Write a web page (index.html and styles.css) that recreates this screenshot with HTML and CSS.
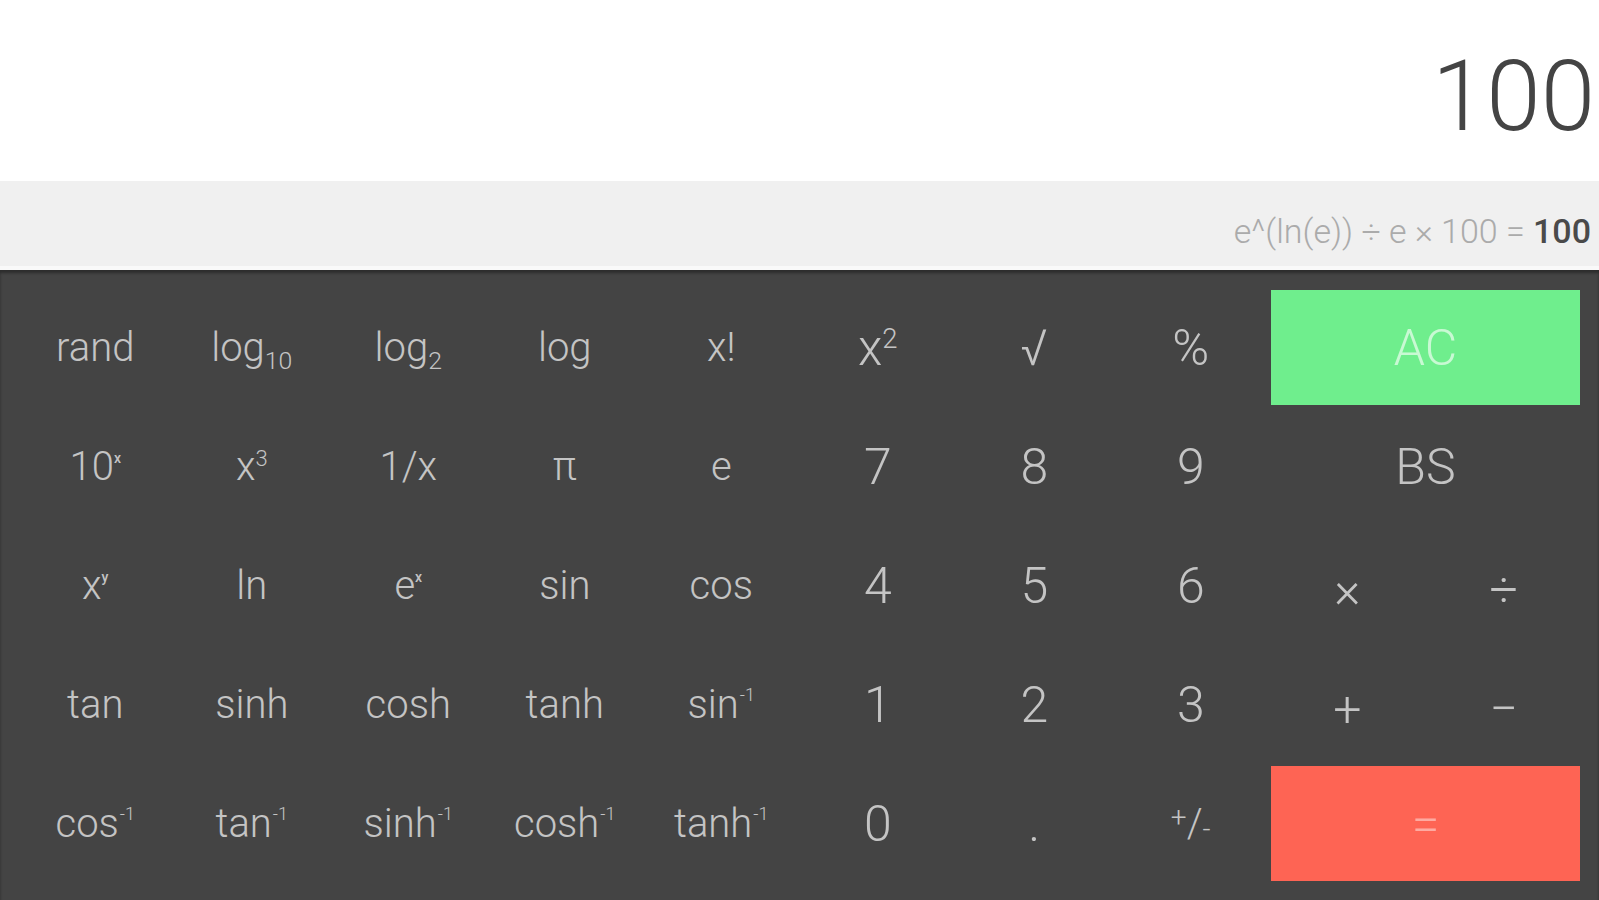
FILE: index.html
```html
<!DOCTYPE html>
<html lang="en">
<head>
<meta charset="utf-8">
<title>Calculator</title>
<link rel="stylesheet" href="styles.css">
</head>
<body>
<div class="calc">
  <div class="display"><span class="result">100</span></div>
  <div class="history"><span class="expr">e^(ln(e)) ÷ e × 100 = </span><b class="answer">100</b></div>
  <div class="keypad">
    <div class="key"><span>rand</span></div>
    <div class="key"><span>log<sub>10</sub></span></div>
    <div class="key"><span>log<sub>2</sub></span></div>
    <div class="key"><span>log</span></div>
    <div class="key"><span>x!</span></div>
    <div class="key big"><span>x<sup class="pow">2</sup></span></div>
    <div class="key big"><span>√</span></div>
    <div class="key big"><span>%</span></div>
    <div class="key big wide ac"><span>AC</span></div>

    <div class="key"><span>10<sup class="tiny">x</sup></span></div>
    <div class="key"><span>x<sup class="pow">3</sup></span></div>
    <div class="key"><span>1/x</span></div>
    <div class="key"><span>π</span></div>
    <div class="key"><span>e</span></div>
    <div class="key big"><span>7</span></div>
    <div class="key big"><span>8</span></div>
    <div class="key big"><span>9</span></div>
    <div class="key big wide"><span>BS</span></div>

    <div class="key"><span>x<sup class="tiny">y</sup></span></div>
    <div class="key"><span>ln</span></div>
    <div class="key"><span>e<sup class="tiny">x</sup></span></div>
    <div class="key"><span>sin</span></div>
    <div class="key"><span>cos</span></div>
    <div class="key big"><span>4</span></div>
    <div class="key big"><span>5</span></div>
    <div class="key big"><span>6</span></div>
    <div class="key big op"><span>×</span></div>
    <div class="key big op"><span>÷</span></div>

    <div class="key"><span>tan</span></div>
    <div class="key"><span>sinh</span></div>
    <div class="key"><span>cosh</span></div>
    <div class="key"><span>tanh</span></div>
    <div class="key"><span>sin<sup class="inv">-1</sup></span></div>
    <div class="key big"><span>1</span></div>
    <div class="key big"><span>2</span></div>
    <div class="key big"><span>3</span></div>
    <div class="key big op"><span>+</span></div>
    <div class="key big op"><span>−</span></div>

    <div class="key"><span>cos<sup class="inv">-1</sup></span></div>
    <div class="key"><span>tan<sup class="inv">-1</sup></span></div>
    <div class="key"><span>sinh<sup class="inv">-1</sup></span></div>
    <div class="key"><span>cosh<sup class="inv">-1</sup></span></div>
    <div class="key"><span>tanh<sup class="inv">-1</sup></span></div>
    <div class="key big"><span>0</span></div>
    <div class="key big"><span>.</span></div>
    <div class="key sign"><span><sup>+</sup>/<sub>-</sub></span></div>
    <div class="key big wide eq"><span>=</span></div>
  </div>
</div>
</body>
</html>
```

FILE: styles.css
```css
* {
  box-sizing: border-box;
}

html, body {
  margin: 0;
  padding: 0;
  height: 100%;
  overflow: hidden;
}

body {
  font-family: Roboto, "Liberation Sans", sans-serif;
  font-weight: 300;
  background: #444444;
}

.calc {
  display: flex;
  flex-direction: column;
  height: 900px;
}

.display {
  height: 181px;
  background: #ffffff;
  display: flex;
  align-items: center;
  justify-content: flex-end;
  padding: 12px 4px 0 0;
}

.result {
  font-size: 98px;
  line-height: 1;
  color: #444444;
}

.history {
  height: 89px;
  background: #f0f0f0;
  border-bottom: 4px solid #f9f9f9;
  display: flex;
  align-items: center;
  justify-content: flex-end;
  padding: 14px 8px 0 0;
  font-size: 34px;
  color: #ababab;
  white-space: pre;
}

.answer {
  font-weight: 500;
  color: #4a4a4a;
}

.keypad {
  flex: 1;
  background: #444444;
  box-shadow: inset 0 3px 3px rgba(0, 0, 0, 0.35);
  padding: 18px 17px 17px;
  display: grid;
  grid-template-columns: repeat(10, 1fr);
  grid-template-rows: repeat(5, 1fr);
}

.key {
  display: flex;
  align-items: center;
  justify-content: center;
  color: #c4c4c4;
  font-size: 40px;
  line-height: 1;
}

.key > span {
  white-space: nowrap;
}

.key.big {
  font-size: 50px;
}

.key.op {
  padding-top: 8px;
}

.key.wide {
  grid-column: span 2;
  margin: 2px 2px 2px 2px;
}

.ac {
  background: #6fee8d;
  color: rgba(255, 255, 255, 0.62);
}

.eq {
  background: #fe6454;
  color: rgba(255, 255, 255, 0.45);
}

sub, sup {
  line-height: 0;
}

.key sub {
  font-size: 0.62em;
  vertical-align: -0.32em;
}

.key sup.pow {
  font-size: 0.55em;
  vertical-align: 0.62em;
}

.key sup.tiny {
  font-size: 0.35em;
  font-weight: 500;
  vertical-align: 1.2em;
}

.key sup.inv {
  font-size: 0.45em;
  vertical-align: 0.9em;
  margin-left: 1px;
}

.key.sign sup {
  font-size: 0.7em;
  vertical-align: 0.35em;
}

.key.sign sub {
  font-size: 0.7em;
  vertical-align: -0.05em;
}
```
